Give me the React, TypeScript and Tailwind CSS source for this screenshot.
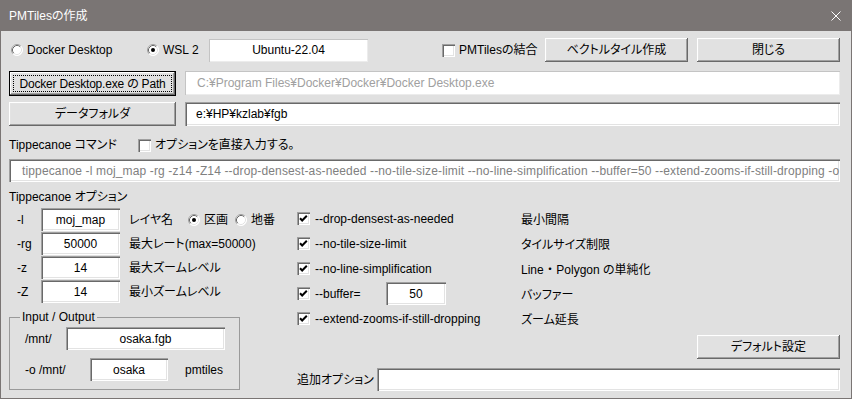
import clsx from "clsx";
import type { ReactNode } from "react";

// Classic Win32 3D edges, drawn with inset shadows.
const SUNKEN =
  "bg-white shadow-[inset_1px_1px_#a0a0a0,inset_2px_2px_#696969,inset_-1px_-1px_#ffffff,inset_-2px_-2px_#e3e3e3]";
const RAISED =
  "bg-[#e1e1e1] shadow-[inset_-1px_-1px_#696969,inset_1px_1px_#ffffff,inset_-2px_-2px_#a0a0a0,inset_2px_2px_#e3e3e3]";
const FLAT = "bg-white shadow-[inset_1px_1px_#c4c4c4,inset_-1px_-1px_#ececec]";

function Radio({ checked, label, className }: { checked?: boolean; label: string; className?: string }) {
  return (
    <div className={clsx("flex items-center gap-[4px]", className)}>
      <svg width="12" height="12" viewBox="0 0 12 12" className="shrink-0">
        <circle cx="6" cy="6" r="5.5" fill="#fff" />
        <path d="M2.11 9.89 A5.5 5.5 0 0 1 9.89 2.11" stroke="#a0a0a0" fill="none" />
        <path d="M2.82 9.18 A4.5 4.5 0 0 1 9.18 2.82" stroke="#696969" fill="none" />
        <path d="M9.89 2.11 A5.5 5.5 0 0 1 2.11 9.89" stroke="#ffffff" fill="none" />
        <path d="M9.18 2.82 A4.5 4.5 0 0 1 2.82 9.18" stroke="#e3e3e3" fill="none" />
        {checked && <circle cx="6" cy="6" r="2" fill="#000" />}
      </svg>
      <span>{label}</span>
    </div>
  );
}

function Check({ checked, children, className }: { checked?: boolean; children: ReactNode; className?: string }) {
  return (
    <div className={clsx("flex items-center", className)}>
      <div className={clsx("w-[13px] h-[13px] shrink-0", SUNKEN)}>
        {checked && (
          <svg width="13" height="13" viewBox="0 0 13 13">
            <polyline points="3,6.2 5.2,8.5 9.8,3.8" fill="none" stroke="#000" strokeWidth="2" />
          </svg>
        )}
      </div>
      {children}
    </div>
  );
}

function Box({
  text = "",
  variant = "sunken",
  center,
  className,
  textClass,
}: {
  text?: string;
  variant?: "sunken" | "flat";
  center?: boolean;
  className?: string;
  textClass?: string;
}) {
  return (
    <div
      className={clsx(
        "flex items-center overflow-hidden whitespace-nowrap shrink-0",
        variant === "sunken" ? SUNKEN : FLAT,
        center ? "justify-center" : "pl-[12px]",
        className,
      )}
    >
      <span className={textClass}>{text}</span>
    </div>
  );
}

function Button({ label, className, focused }: { label: string; className?: string; focused?: boolean }) {
  return (
    <button
      className={clsx(
        "flex items-stretch shrink-0",
        RAISED,
        focused ? "border border-black p-[3px]" : "items-center justify-center",
        className,
      )}
    >
      {focused ? (
        <div className="flex-1 flex items-center justify-center border border-dotted border-black tracking-[-0.2px]">
          {label}
        </div>
      ) : (
        <span className="self-center mx-auto">{label}</span>
      )}
    </button>
  );
}

const LEFT_ROWS = [
  { flag: "-l", value: "moj_map", label: "レイヤ名" },
  { flag: "-rg", value: "50000", label: "最大レート(max=50000)" },
  { flag: "-z", value: "14", label: "最大ズームレベル" },
  { flag: "-Z", value: "14", label: "最小ズームレベル" },
];

const HINTS = ["最小間隔", "タイルサイズ制限", "Line ・ Polygon の単純化", "バッファー", "ズーム延長"];

export default function App() {
  return (
    <div className="w-[852px] h-[399px] flex flex-col bg-[#e0e0e0] text-[12px] leading-none text-black font-['Liberation_Sans','Noto_Sans_CJK_JP',sans-serif] [font-feature-settings:'palt']">
      {/* Title bar */}
      <div className="h-[31px] shrink-0 bg-[#7a7574] flex items-center justify-between pl-[9px] pr-[11px] text-white">
        <span className="text-[12px]">PMTilesの作成</span>
        <svg width="10" height="10" viewBox="0 0 10 10">
          <path d="M0.5 0.5 L9.5 9.5 M9.5 0.5 L0.5 9.5" stroke="#fff" strokeWidth="1" />
        </svg>
      </div>

      <div className="flex-1 flex flex-col border-x border-b border-[#7a7574] pl-[8px] pr-[11px] pt-[7px]">
        {/* Row 1 */}
        <div className="h-[24px] flex items-center">
          <div className="w-[138px]">
            <Radio label="Docker Desktop" className="ml-[2px]" />
          </div>
          <div className="w-[62px]">
            <Radio checked label="WSL 2" />
          </div>
          <Box text="Ubuntu-22.04" variant="flat" center className="w-[159px] h-[23px]" />
          <Check className="ml-[74px] w-[102px]">
            <span className="ml-[4px]">PMTilesの結合</span>
          </Check>
          <Button label="ベクトルタイル作成" className="w-[143px] h-[24px] ml-[1px]" />
          <Button label="閉じる" className="w-[143px] h-[24px] ml-[9px]" />
        </div>

        {/* Row 2 */}
        <div className="mt-[9px] h-[25px] flex items-start">
          <Button focused label="Docker Desktop.exe の Path" className="w-[167px] h-[25px]" />
          <Box
            text="C:¥Program Files¥Docker¥Docker¥Docker Desktop.exe"
            variant="flat"
            className="ml-[9px] flex-1 h-[24px]"
            textClass="text-[#a0a0a0]"
          />
        </div>

        {/* Row 3 */}
        <div className="mt-[6px] h-[24px] flex items-start">
          <Button label="データフォルダ" className="w-[167px] h-[24px]" />
          <Box text="e:¥HP¥kzlab¥fgb" className="ml-[9px] flex-1 h-[24px] !pl-[11px]" />
        </div>

        {/* Row 4 */}
        <div className="mt-[9px] h-[20px] flex items-center">
          <span className="w-[129px]">Tippecanoe コマンド</span>
          <Check>
            <span className="ml-[4px]">オプションを直接入力する。</span>
          </Check>
        </div>

        {/* Command line */}
        <Box
          text="tippecanoe -l moj_map -rg -z14 -Z14 --drop-densest-as-needed --no-tile-size-limit --no-line-simplification --buffer=50 --extend-zooms-if-still-dropping -o"
          className="mt-[4px] w-full h-[23px] !pl-[13px]"
          textClass="text-[#808080] tracking-[0.14px]"
        />

        <div className="mt-[7px] h-[16px] flex items-center">Tippecanoe オプション</div>

        {/* Options */}
        <div className="mt-[1px] flex">
          <div className="w-[288px] shrink-0 pt-[2px] flex flex-col gap-[1px]">
            {LEFT_ROWS.map((r, i) => (
              <div key={r.flag} className="h-[23px] flex items-center">
                <span className="w-[32px] pl-[8px]">{r.flag}</span>
                <Box text={r.value} center className="w-[79px] h-[23px]" />
                <span className={clsx("ml-[9px]", i === 0 && "w-[59px]")}>{r.label}</span>
                {i === 0 && (
                  <>
                    <Radio checked label="区画" />
                    <Radio label="地番" className="ml-[7px]" />
                  </>
                )}
              </div>
            ))}

            <fieldset className="mt-[6px] w-[231px] border border-[#9a9a9a] px-0 pb-[8px]">
              <legend className="ml-[10px] px-[2px] leading-[14px]">Input / Output</legend>
              <div className="pl-[15px] pt-[3px] flex flex-col gap-[8px]">
                <div className="h-[23px] flex items-center">
                  <span className="w-[41px]">/mnt/</span>
                  <Box text="osaka.fgb" center className="w-[159px] h-[23px]" />
                </div>
                <div className="h-[23px] flex items-center">
                  <span className="w-[65px]">-o /mnt/</span>
                  <Box text="osaka" center className="w-[78px] h-[23px]" />
                  <span className="ml-[17px]">pmtiles</span>
                </div>
              </div>
            </fieldset>
          </div>

          <div className="flex-1 flex flex-col">
            <div className="flex">
              <div className="w-[224px] flex flex-col">
                <Check checked className="h-[25px]">
                  <span className="ml-[5px]">--drop-densest-as-needed</span>
                </Check>
                <Check checked className="h-[25px]">
                  <span className="ml-[5px]">--no-tile-size-limit</span>
                </Check>
                <Check checked className="h-[25px]">
                  <span className="ml-[5px]">--no-line-simplification</span>
                </Check>
                <Check checked className="h-[25px]">
                  <span className="ml-[5px] w-[71px]">--buffer=</span>
                  <Box text="50" center className="w-[60px] h-[23px]" />
                </Check>
                <Check checked className="h-[25px]">
                  <span className="ml-[5px]">--extend-zooms-if-still-dropping</span>
                </Check>
              </div>
              <div className="flex flex-col pt-[1px]">
                {HINTS.map((h) => (
                  <div key={h} className="h-[25px] flex items-center">
                    {h}
                  </div>
                ))}
              </div>
            </div>

            <div className="mt-[3px] flex justify-end">
              <Button label="デフォルト設定" className="w-[143px] h-[24px]" />
            </div>

            <div className="mt-[9px] h-[23px] flex items-center">
              <span className="w-[80px]">追加オプション</span>
              <Box className="flex-1 h-[23px]" />
            </div>
          </div>
        </div>
      </div>
    </div>
  );
}
